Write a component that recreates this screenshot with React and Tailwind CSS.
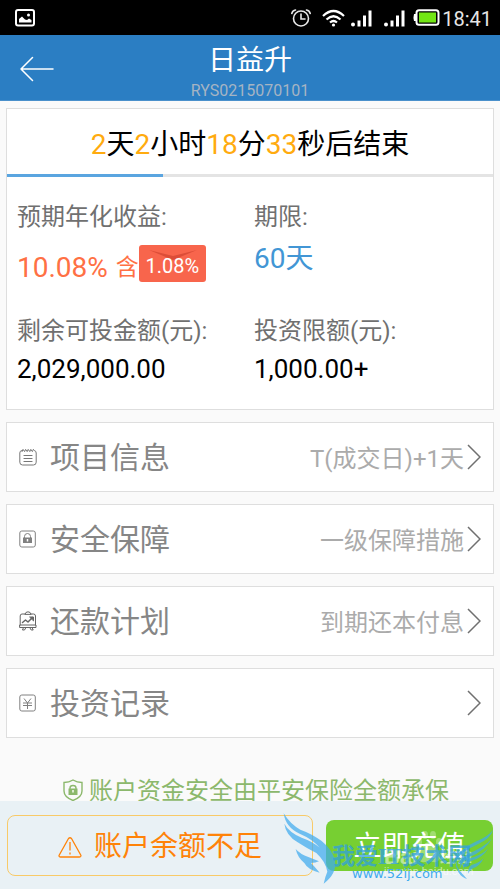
const sections = [
  { title: "项目信息", note: "T(成交日)+1天", icon: NotepadIcon },
  { title: "安全保障", note: "一级保障措施", icon: LockIcon },
  { title: "还款计划", note: "到期还本付息", icon: ChartBoardIcon },
  { title: "投资记录", note: "", icon: YenIcon },
];

function NotepadIcon() {
  return (
    <svg className="w-[18px] h-[18px]" viewBox="0 0 18 18" fill="none" stroke="#777" strokeLinecap="round">
      <path d="M2.5 2.5Q.8 2.8.8 5v9.2q0 2.8 2.8 2.8h10.800q2.800 0 2.800-2.800V5q0-2.200-1.700-2.500" />
      <path d="M3 3.600l1-2.200 1.600 2.200 1-2.200 1.600 2.200 1-2.200 1.600 2.200 1-2.200 1.600 2.200 1-2.200" />
      <path d="M5 7.500h8M5 10.500h8M5 13.500h8" strokeWidth="1.200" />
    </svg>
  );
}

function LockIcon() {
  return (
    <svg className="w-[18px] h-[18px]" viewBox="0 0 18 18" fill="none" stroke="#808080">
      <rect x=".8" y="1" width="15.500" height="16" rx="2" />
      <path d="M5.500 8V6.500a3 3 0 0 1 6 0V8" />
      <path d="M4 7.500h9v5.500H4z" fill="#808080" stroke="none" />
      <path d="M8.500 9v2.500" stroke="#fff" strokeWidth="1.500" />
    </svg>
  );
}

function ChartBoardIcon() {
  return (
    <svg className="w-[18px] h-5" viewBox="0 0 18 20" fill="none" stroke="#666" strokeLinecap="round" strokeLinejoin="round">
      <path d="M6 3H3Q1.200 3 1.200 5v9M12 3h2.500Q16.500 3 16.500 5v9M6 3q.5-2.200 3-2.200T12 3zM1 14h16v2.500H1z" />
      <path d="M3.500 11.500l3-2.500 2.500 2 4.500-4.500" strokeWidth="1.500" />
      <path d="M11 6h3.500v3.500z" fill="#666" />
      <path d="M4.500 16.500L3.500 19h2l1.500-2.500M13 16.500l1.200 2.500h-2l-1.500-2.500" />
    </svg>
  );
}

function YenIcon() {
  return (
    <svg className="w-[18px] h-[18px]" viewBox="0 0 18 18" fill="none" stroke="#808080">
      <rect x=".8" y="1" width="15.500" height="16" rx="2" />
      <path d="M5 4.500l3.500 4.500L12 4.500M8.500 9v6M4 9h9M4 11.500h9" />
    </svg>
  );
}

function Signal() {
  return (
    <svg className="w-[21px] h-[18px]" viewBox="0 0 21 18" fill="#fff">
      <circle cx="2" cy="15.500" r="2" />
      <path d="M6.500 11.500h3v6h-3zM12 6.500h3v11h-3zM17.500 1.500h3v16h-3z" />
    </svg>
  );
}

function StatusBar() {
  return (
    <div className="h-[35px] bg-black flex items-center pl-[15px] pr-2">
      <svg className="w-5 h-[18px]" viewBox="0 0 20 18" fill="none">
        <rect x="1" y="1" width="18" height="15.500" rx="2" stroke="#fff" strokeWidth="2" />
        <path d="M4 13.500v-3.500l3-2.500 3 3 2 .5 2-1.500 2.500 1.500v2.500z" fill="#fff" />
        <circle cx="13.500" cy="6" r="1.500" fill="#fff" />
      </svg>
      <div className="ml-auto flex items-center">
        <svg className="w-5 h-[18px] mr-[11px]" viewBox="0 0 20 18" fill="none" stroke="#e8e8e8" strokeWidth="1.600" strokeLinecap="round">
          <circle cx="10" cy="9.500" r="7.500" />
          <path d="M10 5v5h4M.8 4.500Q1.500 1.500 4.500 1M19.200 4.500Q18.500 1.500 15.500 1" />
        </svg>
        <svg className="w-[23px] h-[18px] mr-1.5" viewBox="0 0 23 18" fill="none" stroke="#fff" strokeWidth="2.200">
          <path d="M1 7Q11.500-3 22 7M4.500 10.500q7-6.500 14 0M8 13.500q3.500-3 7 0" />
          <circle cx="11.500" cy="16" r="1.600" fill="#fff" stroke="none" />
        </svg>
        <Signal />
        <div className="w-3" />
        <Signal />
        <svg className="w-[27px] h-[17px] ml-2 mr-0.5" viewBox="0 0 27 17">
          <path d="M1 5h3v7H1q-1-3.500 0-7z" fill="#fff" />
          <rect x="3.500" y="1.200" width="22" height="14.500" rx="2.500" fill="none" stroke="#fff" strokeWidth="2" />
          <rect x="6" y="3.500" width="17" height="10" fill="#72e615" />
        </svg>
        <span className="pt-0.5 text-[20px] leading-6 text-[#e6e6e6]">18:41</span>
      </div>
    </div>
  );
}

function Header() {
  return (
    <header className="h-[66px] bg-[#2b7ec3] border-b border-[#4a90cb] grid grid-cols-[60px_1fr_60px] items-center">
      <button aria-label="返回" className="pl-5">
        <svg className="w-[34px] h-[26px]" viewBox="0 0 34 26" fill="none" stroke="#fff" strokeWidth="1.500" strokeLinecap="round" strokeLinejoin="round">
          <path d="M33 13H1M12.500 1.500L1 13l11.500 11.500" />
        </svg>
      </button>
      <div className="pt-2 text-center">
        <h1 className="text-[28px] leading-9 text-white">日益升</h1>
        <p className="text-base leading-6 text-[#a5b4c3]">RYS0215070101</p>
      </div>
    </header>
  );
}

function Num({ children }) {
  return <span className="text-[#ffab0f]">{children}</span>;
}

function Summary() {
  return (
    <section className="bg-white border border-[#dedede]">
      <h2 className="h-[65px] pt-1.5 flex items-center justify-center text-[28px] text-black">
        <Num>2</Num>天<Num>2</Num>小时<Num>18</Num>分<Num>33</Num>秒后结束
      </h2>
      <div className="h-[3px] bg-[#e4e4e4]">
        <div className="h-full bg-[#5aa5e0]" style={{ width: "32%" }} />
      </div>
      <dl className="grid grid-cols-2 gap-y-6 pl-2.5 pr-0.5 py-6 text-2xl leading-8 text-[#707070]">
        <div>
          <dt>预期年化收益:</dt>
          <dd className="flex items-start pt-3 text-[#ff7044]">
            <span className="text-[28px] leading-[46px]">10.08%</span>
            <span className="ml-2 text-[23px] leading-[46px]">含</span>
            <span className="relative w-[67px] h-[37px] rounded-[3px] bg-[#f8654c] text-white text-[20px] leading-[43px] text-center">
              <svg className="absolute left-2 top-1 w-[52px] h-[11px]" viewBox="0 0 52 11">
                <path d="M2 1L26 7 50 1 26 11z" fill="#dc4d38" />
              </svg>
              <span className="relative">1.08%</span>
            </span>
          </dd>
        </div>
        <div>
          <dt>期限:</dt>
          <dd className="pt-2.5 text-[28px] text-[#4296d5]">60天</dd>
        </div>
        <div>
          <dt>剩余可投金额(元):</dt>
          <dd className="pt-1.5 text-[26px] text-black">2,029,000.00</dd>
        </div>
        <div>
          <dt>投资限额(元):</dt>
          <dd className="pt-1.5 text-[26px] text-black">1,000.00+</dd>
        </div>
      </dl>
    </section>
  );
}

function SectionLink({ title, note, icon: Icon }) {
  return (
    <a href="#" className="h-[70px] bg-white border border-[#dedede] flex items-center px-3">
      <Icon />
      <span className="ml-[13px] text-[30px] text-[#868686]">{title}</span>
      <span className="ml-auto mr-0.5 pt-1 text-2xl text-[#ababab]">{note}</span>
      <svg className="w-[15px] h-[26px]" viewBox="0 0 15 26" fill="none" stroke="#707070" strokeWidth="1.500">
        <path d="M2 1l12 12L2 25" />
      </svg>
    </a>
  );
}

function Watermark() {
  return (
    <div aria-hidden="true" className="absolute right-[7px] bottom-1 w-[210px] h-[72px] pointer-events-none">
      <span className="absolute left-[101px] top-8 text-[22px] leading-6 font-bold text-white/50 font-[Liberation_Sans]">Bai</span>
      <svg className="absolute left-[132px] top-4 w-[27px] h-9 fill-white/30" viewBox="0 0 27 36">
        <ellipse cx="4" cy="13" rx="3" ry="4" />
        <ellipse cx="10" cy="6" rx="3" ry="4" />
        <ellipse cx="18" cy="6" rx="3" ry="4" />
        <ellipse cx="24" cy="13" rx="3" ry="4" />
        <path d="M14 13q4 0 6 5 5 4 5 9 0 7-7 6-4-1-8 0-7 1-7-6 0-5 5-9 2-5 6-5z" />
      </svg>
      <span className="absolute left-[157px] top-8 text-base leading-6 font-bold text-white/50 whitespace-nowrap">经验</span>
      <span className="absolute left-[101px] top-[51px] text-[11px] leading-4 text-white/60">jingyan.baidu.com</span>
      <svg className="absolute inset-0 w-full h-full" viewBox="100 158 630 216" fill="#3fabee" fillOpacity=".72">
        <path d="M102 159Q122 192 152 208Q186 220 216 242Q250 270 256 302Q262 340 222 370Q226 350 233 334Q228 304 200 278Q168 262 144 246Q108 224 104 190Q118 216 156 232Q190 244 210 262Q188 236 150 220Q108 202 102 159z" />
        <path d="M138 266Q152 282 176 290L208 303Q198 308 184 308Q196 320 210 337Q174 328 164 308Q144 292 138 266z" />
        <path d="M730 209Q722 236 684 252Q632 276 621 298Q618 318 634 336L652 356Q636 352 626 336Q614 314 620 290Q634 264 682 242Q716 228 730 209z" />
        <path d="M727 234Q706 272 660 290Q638 302 630 326Q632 298 652 282Q706 260 727 234zM716 264Q698 294 664 302Q646 308 640 330Q640 304 658 294Q696 286 716 264zM702 294Q690 318 670 324Q660 330 656 340Q654 322 666 314Q688 308 702 294z" />
      </svg>
      <span className="absolute left-[49px] top-[30px] text-[23px] leading-7 font-bold text-[#2f9fe0]/75 whitespace-nowrap font-[Liberation_Serif,Noto_Sans_CJK_SC,sans-serif]">我爱IT技术网</span>
      <span className="absolute left-[69px] top-[53px] text-[13px] leading-4 text-[#3fabee] font-[DejaVu_Sans]">www.52ij.com</span>
    </div>
  );
}

function Footer() {
  return (
    <footer className="relative h-[88px] bg-[#e9f1f5] flex items-center gap-[13px] px-[7px]">
      <button className="flex-1 h-[61px] pt-1 rounded-lg border border-[#f8ca68] flex items-center justify-center gap-3 text-[28px] text-[#ff8308]">
        <svg className="w-6 h-[21px]" viewBox="0 0 24 21" fill="none" stroke="#ff8308" strokeWidth="1.300" strokeLinejoin="round">
          <path d="M10.500 1.500q1.500-1.500 3 0l9.500 17q0 1.500-1.500 1.500h-19Q1 20 1 18.500zM12 5v8.500M12 15.500v2" />
        </svg>
        账户余额不足
      </button>
      <button className="w-[167px] h-[51px] pt-1 rounded-lg bg-[#77cf32] text-[28px] leading-8 text-white">立即充值</button>
      <Watermark />
    </footer>
  );
}

export default function App() {
  return (
    <div className="min-h-screen flex flex-col bg-[#fafafa] font-[Roboto,Noto_Sans_CJK_SC,sans-serif]">
      <StatusBar />
      <Header />
      <main className="flex-1 flex flex-col gap-3 px-1.5 pt-[7px]">
        <Summary />
        {sections.map((section) => (
          <SectionLink key={section.title} {...section} />
        ))}
        <p className="mt-auto flex items-end justify-center gap-1.5 pl-3 text-2xl leading-5 text-[#8cb86c]">
          <svg className="w-5 h-[22px]" viewBox="0 0 20 22" fill="none" stroke="#8cb86c" strokeWidth="1.400">
            <path d="M10 1q4 2.500 9 2.500V12q0 6-9 9.500Q1 18 1 12V3.500Q6 3.500 10 1z" />
            <path d="M7 10V9q0-2.500 3-2.500T13 9v1" />
            <path d="M5.500 9.500h9V16h-9z" fill="#8cb86c" stroke="none" />
            <path d="M10 11v2.500" stroke="#fff" />
          </svg>
          账户资金安全由平安保险全额承保
        </p>
      </main>
      <Footer />
    </div>
  );
}
